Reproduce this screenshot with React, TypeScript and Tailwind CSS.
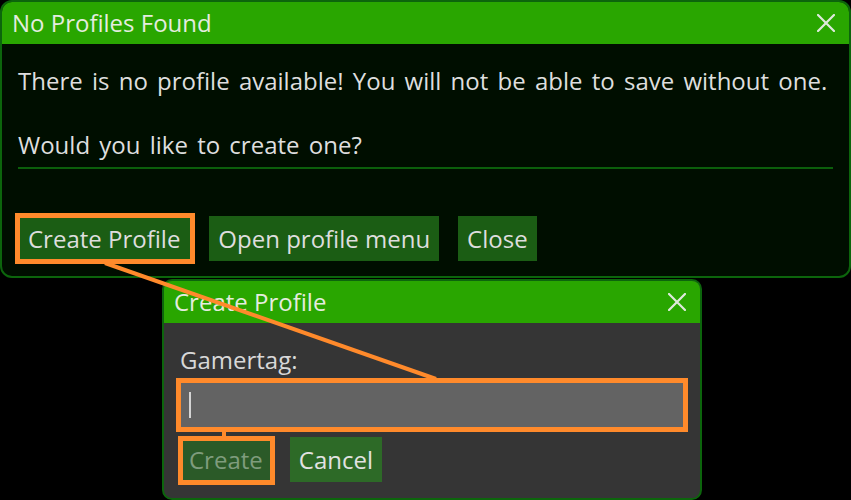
import React from "react";

function XIcon() {
  return (
    <svg width="18" height="18" viewBox="0 0 18 18" className="block">
      <path d="M1 1 L17 17 M17 1 L1 17" stroke="#dfe9dc" strokeWidth="2.2" strokeLinecap="square" />
    </svg>
  );
}

export default function App() {
  return (
    <div className="relative w-[851px] h-[500px] bg-black overflow-hidden font-['Open_Sans',sans-serif] text-[24px] text-[#dedede]">
      {/* Top dialog */}
      <div className="h-[278px] w-full rounded-[12px] border-2 border-[#0c650c] bg-[#000e00] overflow-hidden flex flex-col">
        <div className="h-[42px] shrink-0 bg-[#29a600] flex items-center justify-between pl-[10px] pr-[14px] text-[#e4ecdf]">
          <span className="leading-[32px]">No Profiles Found</span>
          <XIcon />
        </div>
        <div className="pl-[16px] pr-[16px] pt-[21px] flex flex-col">
          <p className="leading-[32px] whitespace-nowrap [word-spacing:3px]">
            There is no profile available! You will not be able to save without one.
          </p>
          <p className="leading-[32px] mt-[32px] whitespace-nowrap [word-spacing:3px]">Would you like to create one?</p>
          <div className="mt-[6px] h-[2px] bg-[#0b5f0b]" />
          <div className="mt-[47px] flex gap-[19px]">
            <div className="h-[45px] px-[10px] bg-[#1b5d14] flex items-center leading-[32px]">Create Profile</div>
            <div className="h-[45px] px-[9px] bg-[#1b5d14] flex items-center leading-[32px]">Open profile menu</div>
            <div className="h-[45px] px-[9px] bg-[#1b5d14] flex items-center leading-[32px]">Close</div>
          </div>
        </div>
      </div>

      {/* Create Profile dialog */}
      <div className="ml-[162px] mt-[1px] w-[540px] h-[221px] rounded-[10px] border-2 border-[#0c650c] bg-[#353535] overflow-hidden flex flex-col">
        <div className="h-[42px] shrink-0 bg-[#29a600] flex items-center justify-between pl-[10px] pr-[14px] text-[#e4ecdf]">
          <span className="leading-[32px]">Create Profile</span>
          <XIcon />
        </div>
        <div className="px-[16px] pt-[21px] flex flex-col">
          <div className="leading-[32px] text-[#d8d8d8]">Gamertag:</div>
          <div className="mt-[6px] h-[46px] w-full bg-[#636363] flex items-center pl-[9px]">
            <div className="w-[2px] h-[26px] bg-[#d4d4d4]" />
          </div>
          <div className="mt-[9px] flex gap-[18px]">
            <div className="h-[45px] px-[9px] bg-[#2b5a28] text-[#7f9c7d] flex items-center leading-[32px]">Create</div>
            <div className="h-[45px] px-[9px] bg-[#2d6a27] text-[#e2e2e2] flex items-center leading-[32px]">Cancel</div>
          </div>
        </div>
      </div>

      {/* Annotation overlays */}
      <div className="absolute left-[15px] top-[213px] w-[180px] h-[51px] border-[5px] border-[#ff8a2b] pointer-events-none" />
      <div className="absolute left-[176px] top-[378px] w-[512px] h-[54px] border-[5px] border-[#ff8a2b] pointer-events-none" />
      <div className="absolute left-[178px] top-[436px] w-[97px] h-[49px] border-[5px] border-[#ff8a2b] pointer-events-none" />
      <svg className="absolute left-0 top-0 pointer-events-none" width="851" height="500">
        <line x1="105" y1="263" x2="436" y2="379" stroke="#ff8a2b" strokeWidth="4" />
        <line x1="224" y1="431" x2="224" y2="437" stroke="#ff8a2b" strokeWidth="4" />
      </svg>
    </div>
  );
}
